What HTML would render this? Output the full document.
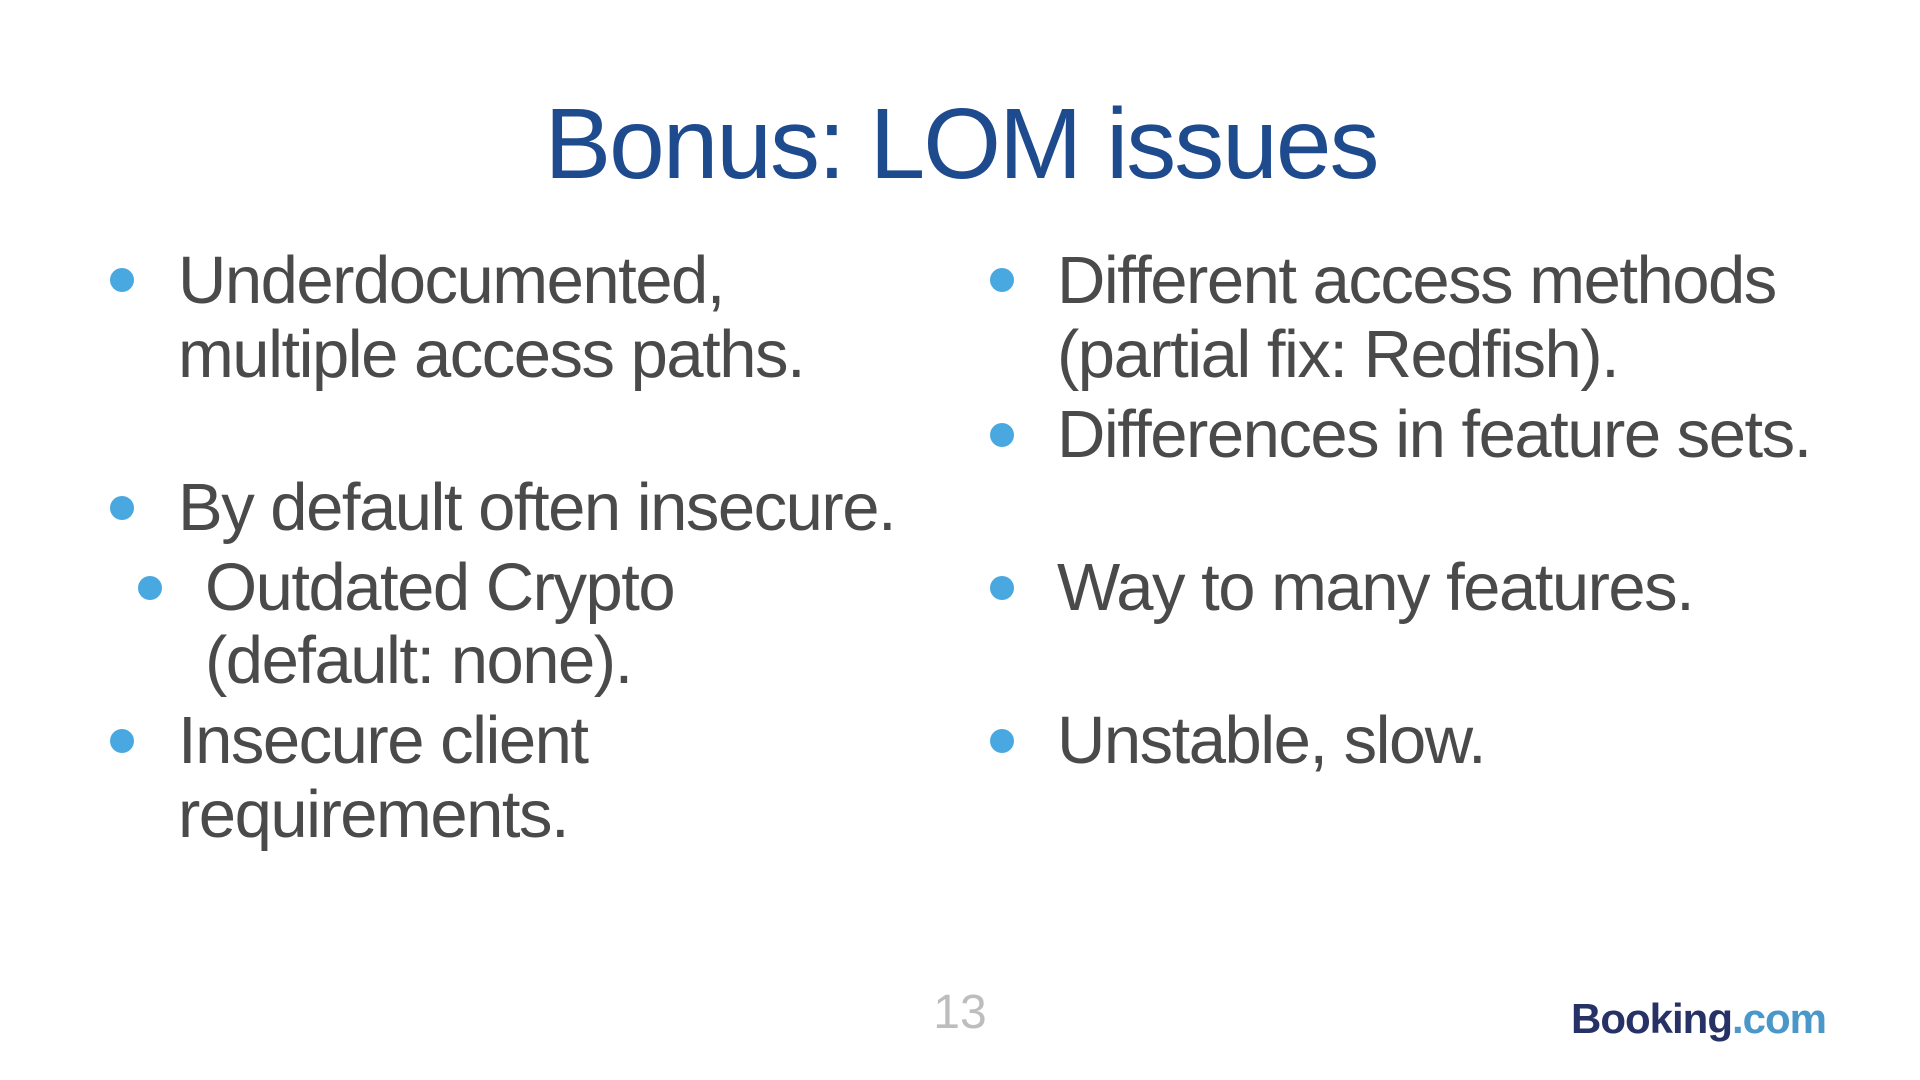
<!DOCTYPE html>
<html><head><meta charset="utf-8"><style>
html,body{margin:0;padding:0;background:#fff;}
body{width:1920px;height:1080px;position:relative;overflow:hidden;font-family:"Liberation Sans",Arial,sans-serif;}
.t{position:absolute;white-space:nowrap;line-height:1;}
.b{font-size:67px;color:#4a4a4a;letter-spacing:-1.5px;}
.d{position:absolute;width:24px;height:24px;border-radius:50%;background:#4aa8e0;}
</style></head><body>
<div class="t" style="left:0;width:1922px;text-align:center;top:94px;font-size:100px;color:#1e4a8e;letter-spacing:-2px;">Bonus: LOM issues</div>

<div class="d" style="left:110px;top:268px"></div>
<div class="t b" style="left:178px;top:247px">Underdocumented,</div>
<div class="t b" style="left:178px;top:321px">multiple access paths.</div>

<div class="d" style="left:110px;top:496px"></div>
<div class="t b" style="left:178px;top:474px">By default often insecure.</div>
<div class="d" style="left:138px;top:576px"></div>
<div class="t b" style="left:205px;top:554px">Outdated Crypto</div>
<div class="t b" style="left:205px;top:627px">(default: none).</div>
<div class="d" style="left:110px;top:729px"></div>
<div class="t b" style="left:178px;top:707px">Insecure client</div>
<div class="t b" style="left:178px;top:781px">requirements.</div>

<div class="d" style="left:990px;top:268px"></div>
<div class="t b" style="left:1057px;top:247px">Different access methods</div>
<div class="t b" style="left:1057px;top:321px">(partial fix: Redfish).</div>
<div class="d" style="left:990px;top:423px"></div>
<div class="t b" style="left:1057px;top:401px">Differences in feature sets.</div>
<div class="d" style="left:990px;top:576px"></div>
<div class="t b" style="left:1057px;top:554px">Way to many features.</div>
<div class="d" style="left:990px;top:729px"></div>
<div class="t b" style="left:1057px;top:707px">Unstable, slow.</div>

<div class="t" style="left:0;width:1920px;text-align:center;top:989px;font-size:48px;color:#bdbdbd;">13</div>
<div class="t" style="left:1571px;top:998px;font-size:42px;font-weight:bold;color:#263266;letter-spacing:-1px;">Booking<span style="color:#4a97c9;">.com</span></div>
</body></html>
